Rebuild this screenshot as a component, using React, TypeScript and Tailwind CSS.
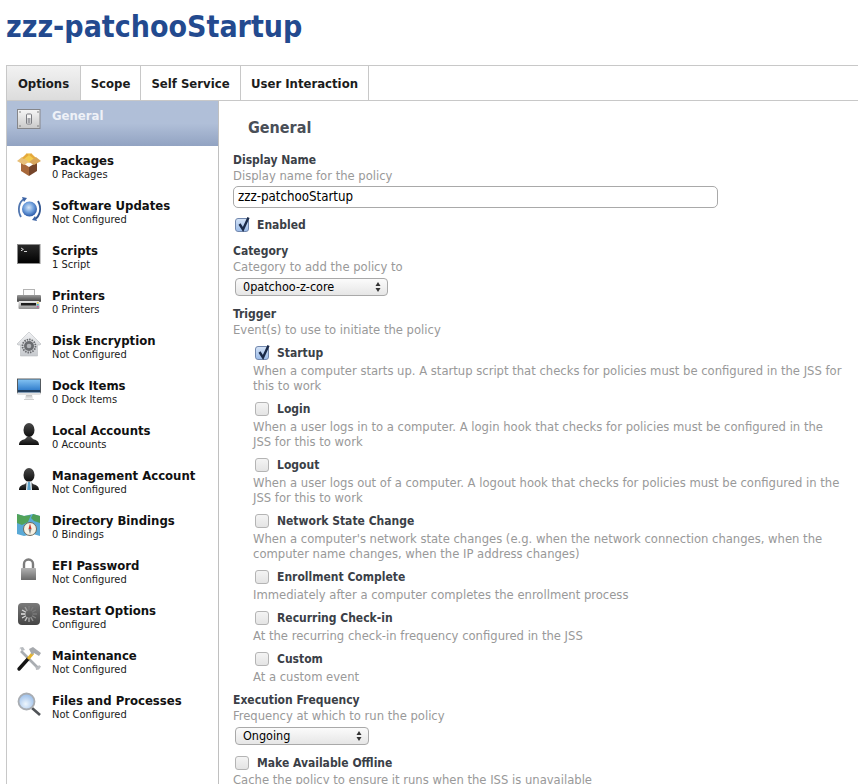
import type { ReactNode } from 'react';

const font = "[font-family:'DejaVu_Sans_Condensed','DejaVu_Sans',sans-serif] [font-stretch:condensed]";

const tabs = [
  { label: 'Options', width: 'w-[74px]' },
  { label: 'Scope', width: 'w-[60px]' },
  { label: 'Self Service', width: 'w-[100px]' },
  { label: 'User Interaction', width: 'w-[128px]' },
];

const Icon = ({ children }: { children: ReactNode }) => (
  <svg viewBox="0 0 24 26" className="w-6 h-[26px] shrink-0 overflow-visible">
    {children}
  </svg>
);

const Vert = ({ id, from, to }: { id: string; from: string; to: string }) => (
  <linearGradient id={id} x1="0" y1="0" x2="0" y2="1">
    <stop offset="0" stopColor={from} />
    <stop offset="1" stopColor={to} />
  </linearGradient>
);

// dark silhouette shared by the two account icons
const Person = ({ id }: { id: string }) => (
  <>
    <defs>
      <Vert id={id} from="#4a4a4a" to="#0c0c0c" />
    </defs>
    <ellipse cx="12" cy="9" rx="5.5" ry="7" fill={`url(#${id})`} />
    <path d="M2 24c0-4 3-5 6-6l2-2h4l2 2c3 1 6 2 6 6z" fill={`url(#${id})`} />
  </>
);

const icons: Record<string, ReactNode> = {
  General: (
    <Icon>
      <defs>
        <Vert id="gen" from="#f6f6f6" to="#c9c9c9" />
      </defs>
      <rect x=".5" y="3.5" width="22.5" height="19" fill="url(#gen)" stroke="#85868a" />
      <circle cx="3" cy="6" r=".8" fill="#777" />
      <circle cx="21" cy="6" r=".8" fill="#777" />
      <circle cx="3" cy="20" r=".8" fill="#777" />
      <circle cx="21" cy="20" r=".8" fill="#777" />
      <rect x="9.5" y="8" width="5" height="10" rx="1" fill="#f4f4f4" stroke="#7c7d82" />
      <rect x="10.5" y="12" width="3" height="5" fill="#a2a3a8" />
    </Icon>
  ),
  Packages: (
    <Icon>
      <path d="M5 7l7-5 7 5-7 5z" fill="#f3cb4f" />
      <path d="M4 11l8 5v9l-8-5z" fill="#a8683a" />
      <path d="M20 11l-8 5v9l8-5z" fill="#75452a" />
      <path d="M5 6 0 10l7 4 5-3z" fill="#e8bf78" />
      <path d="M19 6l5 4-7 4-5-3z" fill="#d7a55c" />
      <path d="M5 7l5-5 2 2-5 4zM19 7l-5-5-2 2 5 4z" fill="#e5a93c" />
    </Icon>
  ),
  'Software Updates': (
    <Icon>
      <defs>
        <radialGradient id="globe" cx=".45" cy=".4" r=".6">
          <stop offset="0" stopColor="#d6e6f7" />
          <stop offset=".55" stopColor="#6f9fdc" />
          <stop offset="1" stopColor="#2b5aa8" />
        </radialGradient>
      </defs>
      <circle cx="12.5" cy="13" r="7.5" fill="url(#globe)" />
      <path d="M7 3C2 6 0 14 4 21" fill="none" stroke="#5277b0" strokeWidth="1.8" />
      <path d="M18 23c5-3 7-11 3-18" fill="none" stroke="#31558f" strokeWidth="1.8" />
      <path d="M5 1l5 1-3 4zM20 25l-5-1 3-4z" fill="#3a62a4" />
    </Icon>
  ),
  Scripts: (
    <Icon>
      <defs>
        <Vert id="term" from="#2a2a2a" to="#000" />
      </defs>
      <rect x=".5" y="3.5" width="22.5" height="19" fill="url(#term)" stroke="#8c8c8c" />
      <path d="M4 7l2.4 1.4L4 9.8" fill="none" stroke="#e8e8e8" strokeWidth=".9" />
      <path d="M7 10.5h3" stroke="#e8e8e8" strokeWidth=".9" />
    </Icon>
  ),
  Printers: (
    <Icon>
      <defs>
        <Vert id="prBody" from="#9a9a9a" to="#3e3e3e" />
        <Vert id="prBase" from="#e9e9e9" to="#8e8e8e" />
      </defs>
      <rect x="6.5" y="3.5" width="11" height="7" fill="#fafafa" stroke="#b4b4b4" />
      <rect y="9" width="24" height="7" rx="1" fill="url(#prBody)" />
      <rect x="1.5" y="15" width="21" height="8" rx="1" fill="url(#prBase)" />
      <rect x="4" y="17" width="15" height="2.5" fill="#1d1d1d" />
      <rect x="20" y="16" width="1.5" height="1.5" fill="#e7d63b" />
      <rect x="20" y="18" width="1.5" height="1.5" fill="#3cb8d8" />
      <rect x="20" y="20" width="1.5" height="1.5" fill="#cf4f9b" />
    </Icon>
  ),
  'Disk Encryption': (
    <Icon>
      <defs>
        <Vert id="house" from="#f0f1f3" to="#c7cace" />
      </defs>
      <path d="M12 1 0 13l1 1h2.500v11h17V14H23l1-1z" fill="url(#house)" stroke="#b9bcc0" strokeWidth=".6" />
      <circle cx="12" cy="15" r="5" fill="#6a6c70" />
      <circle cx="12" cy="15" r="6.500" fill="none" stroke="#6a6c70" strokeWidth="1.800" strokeDasharray="1.500 1" />
      <circle cx="12" cy="15" r="2.300" fill="#b2b4b8" />
    </Icon>
  ),
  'Dock Items': (
    <Icon>
      <defs>
        <Vert id="screen" from="#86c5f4" to="#1d6cc2" />
        <Vert id="stand" from="#bdbdbd" to="#f0f0f0" />
      </defs>
      <rect x=".5" y="3" width="23" height="14" fill="url(#screen)" stroke="#3d3d3d" strokeWidth=".8" />
      <rect x="1" y="14" width="22" height="2" fill="#23405f" />
      <rect x=".5" y="16.500" width="23" height="2.500" fill="#e2e2e2" />
      <path d="M9 19h6l1 4H8z" fill="url(#stand)" />
      <rect x="7" y="23" width="10" height="1" fill="#cfcfcf" />
    </Icon>
  ),
  'Local Accounts': (
    <Icon>
      <Person id="userA" />
    </Icon>
  ),
  'Management Account': (
    <Icon>
      <Person id="userB" />
      <path d="M9.500 15.500h5L15 24H9z" fill="#e9eef2" />
      <path d="M11 16h2l.8 8h-3.600z" fill="#5ea2c9" />
    </Icon>
  ),
  'Directory Bindings': (
    <Icon>
      <path d="M0 3l7 2 9-2 7 2v20l-7-2-9 2-7-2z" fill="#5aa9d6" />
      <path d="M0 3l7 2 7-1-3 7-6 3-5-2z" fill="#52a35a" />
      <path d="M16 3l7 2v7l-6-2-3-3z" fill="#4f9e58" />
      <circle cx="13" cy="18" r="6.500" fill="#f7f2e4" stroke="#6f6a5c" />
      <path d="M13 12.500 14.500 18h-3z" fill="#c8342c" />
      <path d="M13 23.500 11.500 18h3z" fill="#8a8a8a" />
    </Icon>
  ),
  'EFI Password': (
    <Icon>
      <defs>
        <Vert id="lock" from="#b2b2b2" to="#6a6a6a" />
      </defs>
      <path d="M7 13V8a4.500 4.500 0 0 1 9 0v5" fill="none" stroke="#7c7c7c" strokeWidth="2.400" />
      <rect x="4" y="12" width="15" height="12" rx=".6" fill="url(#lock)" />
    </Icon>
  ),
  'Restart Options': (
    <Icon>
      <defs>
        <Vert id="restart" from="#7a7a7a" to="#444" />
      </defs>
      <rect x="1" y="2" width="22" height="22" rx="4" fill="url(#restart)" />
      {Array.from({ length: 12 }).map((_, i) => (
        <rect
          key={i}
          x="11.300"
          y="5"
          width="1.400"
          height="4.500"
          fill="#f0f0f0"
          opacity={[0.12, 0.12, 0.14, 0.2, 0.3, 0.4, 0.55, 0.7, 0.85, 1, 0.8, 0.4][i]}
          transform={`rotate(${i * 30} 12 13)`}
        />
      ))}
    </Icon>
  ),
  Maintenance: (
    <Icon>
      <path d="M4 5l17 17" stroke="#a9adb1" strokeWidth="2.600" />
      <path d="M1 6l2-4 2 3 3-1-2-3-3 .5zM19 24l3-.5 2-3-2-1.500-1.500 2-2-1z" fill="#b9bcc0" />
      <path d="M2 23 11 13" stroke="#151515" strokeWidth="3.400" strokeLinecap="round" />
      <path d="M11 13l5-6" stroke="#e6b52e" strokeWidth="3" />
      <path d="M12 3l4-2 8 6-2 3-5-3-2 2z" fill="#a6a9ad" />
    </Icon>
  ),
  'Files and Processes': (
    <Icon>
      <defs>
        <radialGradient id="lens" cx=".45" cy=".65" r=".7">
          <stop offset="0" stopColor="#eef6fd" />
          <stop offset="1" stopColor="#8fb6e6" />
        </radialGradient>
      </defs>
      <path d="M15 17l8 7" stroke="#4f5256" strokeWidth="2.600" />
      <circle cx="9.500" cy="10.500" r="8" fill="url(#lens)" stroke="#a9adb2" strokeWidth="1.800" />
    </Icon>
  ),
};

const sideItems = [
  { title: 'Packages', sub: '0 Packages' },
  { title: 'Software Updates', sub: 'Not Configured' },
  { title: 'Scripts', sub: '1 Script' },
  { title: 'Printers', sub: '0 Printers' },
  { title: 'Disk Encryption', sub: 'Not Configured' },
  { title: 'Dock Items', sub: '0 Dock Items' },
  { title: 'Local Accounts', sub: '0 Accounts' },
  { title: 'Management Account', sub: 'Not Configured' },
  { title: 'Directory Bindings', sub: '0 Bindings' },
  { title: 'EFI Password', sub: 'Not Configured' },
  { title: 'Restart Options', sub: 'Configured' },
  { title: 'Maintenance', sub: 'Not Configured' },
  { title: 'Files and Processes', sub: 'Not Configured' },
];

const triggers = [
  {
    label: 'Startup',
    checked: true,
    text: 'When a computer starts up. A startup script that checks for policies must be configured in the JSS for this to work',
  },
  {
    label: 'Login',
    text: 'When a user logs in to a computer. A login hook that checks for policies must be configured in the JSS for this to work',
  },
  {
    label: 'Logout',
    text: 'When a user logs out of a computer. A logout hook that checks for policies must be configured in the JSS for this to work',
  },
  {
    label: 'Network State Change',
    text: "When a computer's network state changes (e.g. when the network connection changes, when the computer name changes, when the IP address changes)",
  },
  {
    label: 'Enrollment Complete',
    text: 'Immediately after a computer completes the enrollment process',
  },
  {
    label: 'Recurring Check-in',
    text: 'At the recurring check-in frequency configured in the JSS',
  },
  { label: 'Custom', text: 'At a custom event' },
];

const Checkbox = ({ checked = false }: { checked?: boolean }) => (
  <span
    className={`relative block w-[14px] h-[14px] rounded-[3px] border shrink-0 ${
      checked
        ? 'border-[#7288ae] bg-linear-to-b from-[#d3e2f6] to-[#9dbde9]'
        : 'border-[#b4b4b4] bg-linear-to-b from-[#f4f4f4] to-[#e4e4e4]'
    }`}
  >
    {checked && (
      <svg viewBox="0 0 16 16" className="absolute -top-[4px] left-0 w-4 h-[18px]">
        <path d="M3.500 8 7 13.500 12.500 1.500" fill="none" stroke="#1a2a48" strokeWidth="2.400" />
      </svg>
    )}
  </span>
);

const Select = ({ value, width }: { value: string; width: string }) => (
  <div
    className={`ml-[2px] flex items-center justify-between h-[18px] pl-[7px] pr-[6px] rounded-[4px] border border-[#a9a9a9] bg-linear-to-b from-[#fbfbfb] to-[#e6e6e6] text-[12.5px] text-black ${width}`}
  >
    <span>{value}</span>
    <svg viewBox="0 0 6 10" className="w-[6px] h-[10px]">
      <path d="M3 0l2.500 4h-5zM3 10 .5 6h5z" fill="#333" />
    </svg>
  </div>
);

const Field = ({ label, hint }: { label: string; hint: string }) => (
  <div>
    <div className="h-4 text-xs font-bold leading-4 text-[#3b3f47]">{label}</div>
    <div className="h-4 text-[12.9px] leading-4 text-[#999]">{hint}</div>
  </div>
);

export default function App() {
  return (
    <div className={`w-[858px] h-[784px] overflow-hidden bg-white ${font}`}>
      <h1 className="h-[65px] pl-[6px] pt-[7px] text-[30px] leading-10 font-bold text-[#234a8f]">
        zzz-patchooStartup
      </h1>

      {/* Tabs */}
      <div className="ml-[6px] flex h-[36px] border-y border-[#c8c8c8] border-l text-[13px] font-bold text-[#1c1c1c]">
        {tabs.map((tab, i) => (
          <div
            key={tab.label}
            className={`flex items-center justify-center pt-[1px] border-r border-[#c8c8c8] ${tab.width} ${
              i === 0 ? 'bg-linear-to-b from-[#f2f2f2] to-[#dcdcdc]' : ''
            }`}
          >
            {tab.label}
          </div>
        ))}
      </div>

      <div className="ml-[6px] flex h-[684px] border-l border-[#c8c8c8]">
        {/* Sidebar */}
        <div className="w-[212px] h-full border-r border-[#c0c0c0] shrink-0">
          <div className="flex gap-[11px] h-[45px] pl-[10px] pt-[5px] bg-linear-to-b from-[#b0bfd8] via-[#b0bfd8] to-[#92a3c2]">
            {icons.General}
            <div className="text-[13px] font-bold leading-4 text-[#eef1f7] pt-[2px]">General</div>
          </div>
          {sideItems.map((item) => (
            <div key={item.title} className="flex gap-[11px] h-[45px] pl-[10px] pt-[5px]">
              {icons[item.title]}
              <div>
                <div className="text-[13px] font-bold leading-[15px] text-[#111] pt-[2px]">{item.title}</div>
                <div className="text-[11px] leading-[13px] text-[#1a1a1a]">{item.sub}</div>
              </div>
            </div>
          ))}
        </div>

        {/* Main form */}
        <div className="flex-1 min-w-0 pl-[14px]">
          <h2 className="pl-[15px] pt-[17px] h-[51px] text-base leading-5 font-bold text-[#4a4f58]">General</h2>

          <Field label="Display Name" hint="Display name for the policy" />
          <div className="mt-[2px] w-[485px] h-[22px] rounded-[5px] border border-[#a9a9a9] pl-[4px] text-[13.2px] leading-5 text-black">
            zzz-patchooStartup
          </div>
          <div className="mt-[9px] flex items-center gap-[8px] h-4 pl-[2px] text-xs font-bold text-[#3b3f47]">
            <Checkbox checked />
            Enabled
          </div>

          <div className="mt-[10px]">
            <Field label="Category" hint="Category to add the policy to" />
          </div>
          <div className="mt-[3px]">
            <Select value="0patchoo-z-core" width="w-[153px]" />
          </div>

          <div className="mt-[10px]">
            <Field label="Trigger" hint="Event(s) to use to initiate the policy" />
          </div>

          <div className="pl-[20px] mt-[7px] pr-[15px] flex flex-col gap-[8px]">
            {triggers.map((t) => (
              <div key={t.label}>
                <div className="flex items-center gap-[8px] h-4 pl-[2px] text-xs font-bold text-[#3b3f47]">
                  <Checkbox checked={t.checked} />
                  {t.label}
                </div>
                <div className="mt-[2px] text-[12.9px] leading-[15px] text-[#999]">{t.text}</div>
              </div>
            ))}
          </div>

          <div className="mt-[8px]">
            <Field label="Execution Frequency" hint="Frequency at which to run the policy" />
          </div>
          <div className="mt-[3px]">
            <Select value="Ongoing" width="w-[134px]" />
          </div>
          <div className="mt-[10px] flex items-center gap-[8px] h-4 pl-[2px] text-xs font-bold text-[#3b3f47]">
            <Checkbox />
            Make Available Offline
          </div>
          <div className="mt-[1px] text-[12.9px] leading-4 text-[#999]">
            Cache the policy to ensure it runs when the JSS is unavailable
          </div>
        </div>
      </div>
    </div>
  );
}
